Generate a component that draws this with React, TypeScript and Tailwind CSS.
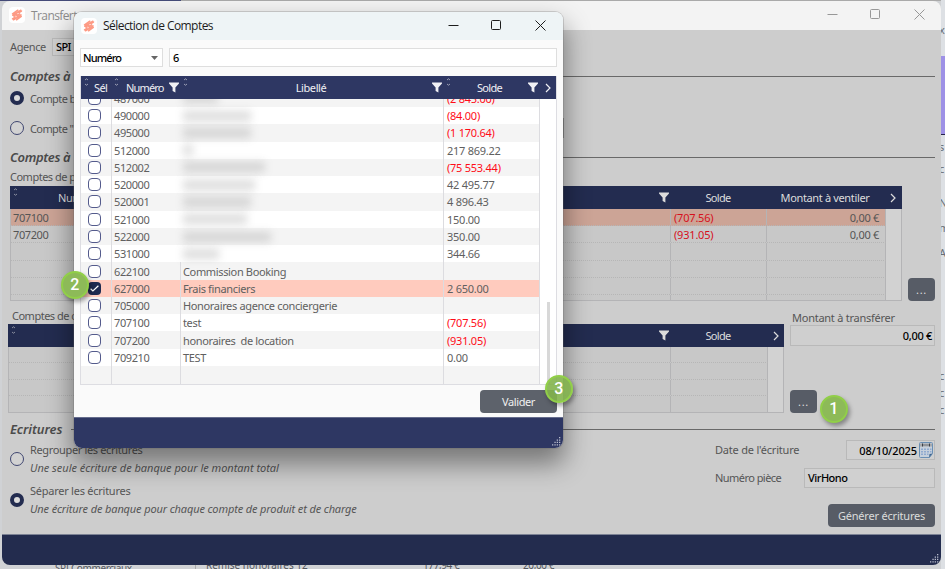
import type { ReactNode } from 'react';

type Account = {
  num: string;
  label?: string;
  // width in px of the masked label
  masked?: number;
  solde?: string;
  checked?: boolean;
};

const accounts: Account[] = [
  { num: '487000', masked: 35, solde: '(2 845.00)' },
  { num: '490000', masked: 68, solde: '(84.00)' },
  { num: '495000', masked: 68, solde: '(1 170.64)' },
  { num: '512000', masked: 10, solde: '217 869.22' },
  { num: '512002', masked: 82, solde: '(75 553.44)' },
  { num: '520000', masked: 72, solde: '42 495.77' },
  { num: '520001', masked: 68, solde: '4 896.43' },
  { num: '521000', masked: 64, solde: '150.00' },
  { num: '522000', masked: 88, solde: '350.00' },
  { num: '531000', masked: 36, solde: '344.66' },
  { num: '622100', label: 'Commission Booking' },
  { num: '627000', label: 'Frais financiers', solde: '2 650.00', checked: true },
  { num: '705000', label: 'Honoraires agence conciergerie' },
  { num: '707100', label: 'test', solde: '(707.56)' },
  { num: '707200', label: 'honoraires  de location', solde: '(931.05)' },
  { num: '709210', label: 'TEST', solde: '0.00' },
];

function Logo() {
  return (
    <div className="flex h-4 w-4 shrink-0 items-center justify-center rounded-sm bg-white">
      <svg width="12" height="12" viewBox="0 0 12 12" fill="none" stroke="#fd9a84" strokeWidth="1.5" strokeLinecap="round">
        <path d="M1.500 4.800 6.800 1.200M1.800 6.300 9.800 1.200M2.900 7.100 6 5M8 3.600 10.500 2M5.800 6.900 8.600 4.900M1.500 9.800 4.200 8M2.500 10.800 10 5.800M5.500 10.800 10.300 7.300" />
      </svg>
    </div>
  );
}

function WindowButtons({ className }: { className: string }) {
  return (
    <svg width="100" height="12" viewBox="0 0 100 12" fill="none" className={className}>
      <path d="M.5 5.5h10" />
      <rect x="43.5" y=".5" width="9" height="9" rx="1" />
      <path d="m87.500 .5 10 10M97.500 .5l-10 10" />
    </svg>
  );
}

function Funnel() {
  return (
    <svg width="10" height="11" viewBox="0 0 10 11" fill="currentColor" className="shrink-0">
      <path d="M0 .5h10v1L6.4 5.6V10.5L3.6 9V5.6L0 1.5z" />
    </svg>
  );
}

function Chevron() {
  return (
    <svg width="6" height="10" viewBox="0 0 6 10" fill="none" stroke="currentColor" strokeWidth="1.2" className="shrink-0">
      <path d="m1 1 4 4-4 4" />
    </svg>
  );
}

function SortMark() {
  return (
    <svg width="5" height="8" viewBox="0 0 5 8" fill="none" stroke="currentColor" strokeWidth=".8" className="mt-0.5 shrink-0 self-start opacity-70">
      <path d="M1 2 2.5.8 4 2M1 6l1.5 1.2L4 6" />
    </svg>
  );
}

function Grip() {
  return (
    <svg width="9" height="9" viewBox="0 0 9 9" fill="#b9bdcd">
      <path d="M7 0h1.3v1.3H7zM7 2.4h1.3v1.3H7zM7 4.8h1.3v1.3H7zM7 7.2h1.3v1.3H7zM4.7 2.4H6v1.3H4.7zM4.7 4.8H6v1.3H4.7zM4.7 7.2H6v1.3H4.7zM2.4 4.8h1.3v1.3H2.4zM2.4 7.2h1.3v1.3H2.4zM0 7.2h1.3v1.3H0z" />
    </svg>
  );
}

function Radio({ on }: { on?: boolean }) {
  return on ? (
    <span className="h-3.5 w-3.5 shrink-0 rounded-full border-4 border-[#232c50] bg-[#dcdcdc]" />
  ) : (
    <span className="h-3.5 w-3.5 shrink-0 rounded-full border border-[#3f4670] bg-[#d2d2d2]" />
  );
}

function Checkbox({ on }: { on?: boolean }) {
  if (!on) return <span className="h-[13px] w-[13px] rounded-[4px] border border-[#545b8c] bg-white" />;
  return (
    <span className="flex h-[13px] w-[13px] items-center justify-center rounded-[4px] bg-[#1d2950]">
      <svg width="9" height="7" viewBox="0 0 9 7" fill="none" stroke="#fff" strokeWidth="1.2">
        <path d="m.6 3.8 2.3 2.2L8.4.8" />
      </svg>
    </span>
  );
}

function Calendar() {
  return (
    <svg width="14" height="16" viewBox="0 0 14 16" className="shrink-0">
      <path d="M.5 1.5q0-1 1-1h11q1 0 1 1v10l-3 4h-9q-1 0-1-1z" fill="#c6d0dc" stroke="#6a8fb4" />
      <path d="M1 1.500h12v3H1z" fill="#a7a9ac" />
      <path d="M3 3h8" stroke="#7c7f84" />
      <path d="M3.5 1.500v3M10.500 1.500v3" stroke="#3c4046" />
      <path d="M2 6.500h2v1.500H2zM5 6.500h2v1.500H5zM8 6.500h2v1.500H8zM11 6.500h1.500v1.500H11zM2 9h2v1.500H2zM5 9h2v1.500H5zM8 9h2v1.500H8zM11 9h1.500v1.500H11zM2 11.500h2V13H2zM5 11.500h2V13H5zM8 11.500h1.500V13H8z" fill="#8faad0" />
      <path d="m10 15.500 .5-3.500 3-.5z" fill="#3b648f" />
    </svg>
  );
}

function Heading({ children }: { children: ReactNode }) {
  return (
    <div className="flex h-4 items-center gap-[9px] text-[13px] leading-4 font-semibold tracking-[-0.05px] text-[#4b4b4b] italic">
      {children}
      <span className="h-px grow bg-[#696969]" />
    </div>
  );
}

function Badge({ n, className }: { n: number; className: string }) {
  return (
    <div
      className={`absolute flex h-7 w-7 items-center justify-center rounded-full border-2 border-[#91cf48] pr-px pb-px font-[Roboto,sans-serif] text-[16px] font-medium text-white shadow-[2px_3px_4px_rgba(0,0,0,0.35)] ${className}`}
    >
      {n}
    </div>
  );
}

function AccountRow({ row, odd }: { row: Account; odd: boolean }) {
  const bg = row.checked ? 'bg-[#ffcbbe]' : odd ? 'bg-white' : 'bg-[#f4f4f4]';
  return (
    <div className={`grid h-[17.27px] shrink-0 grid-cols-[31px_69px_263px_95px] items-center text-[#606060] ${bg}`}>
      <div className="flex h-full items-center justify-center border-r border-[#dcdce0] pr-[3px]">
        <Checkbox on={row.checked} />
      </div>
      <div className={`flex h-full items-center pl-[2px] ${row.masked ? '' : 'border-r border-[#dcdce0]'}`}>{row.num}</div>
      <div className="flex h-full items-center border-r border-[#dcdce0] pl-[2px] tracking-[-0.35px] whitespace-pre">
        {row.masked ? <span className="h-2.5 bg-[#777] opacity-25 blur-[4px]" style={{ width: row.masked }} /> : row.label}
      </div>
      <div className={`pl-[3px] tracking-[-0.25px] ${row.solde?.startsWith('(') ? 'text-[#ff0c18]' : ''}`}>{row.solde}</div>
    </div>
  );
}

function SelectionDialog() {
  return (
    <div className="absolute top-3 left-[74px] flex h-[436px] w-[489px] flex-col rounded-lg bg-[#fafafa] shadow-[0_0_0_1px_rgba(100,100,100,0.25),0_14px_26px_2px_rgba(0,0,0,0.42)]">
      <div className="flex h-7 shrink-0 items-center rounded-t-lg bg-[#eef4f6] pr-[15px] pb-px pl-[7px]">
        <Logo />
        <span className="ml-[6px] grow font-['Open_Sans',sans-serif] text-[12px] tracking-[-0.55px] text-[#1c1c1c]">
          Sélection de Comptes
        </span>
        <WindowButtons className="stroke-[#1c1c1c]" />
      </div>

      <div className="flex shrink-0 gap-1.5 px-1.5 pt-2 font-medium text-black">
        <div className="flex h-[19px] w-[83px] items-center justify-between border border-[#dedede] bg-white pr-1 pl-[2px] tracking-[-0.85px]">
          Numéro
          <svg width="7" height="4" viewBox="0 0 7 4" fill="#666">
            <path d="M0 0h7L3.500 4z" />
          </svg>
        </div>
        <div className="flex h-[19px] grow items-center border border-[#dedede] bg-white pl-[3px]">6</div>
      </div>

      <div className="mt-[9px] ml-1.5 flex h-[309px] w-[477px] shrink-0 flex-col border-x border-b border-[#dddde2] bg-white">
        <div className="z-10 flex h-[23px] shrink-0 bg-[#2e3763] text-[#f0f0f4]">
          <div className="flex w-[30px] items-center gap-[5px] pl-[3px] tracking-[-0.6px]">
            <SortMark />
            Sél
          </div>
          <div className="flex w-[70px] items-center pl-[3px]">
            <SortMark />
            <span className="ml-[7px] grow tracking-[-0.85px]">Numéro</span>
            <span className="pr-[2px]"><Funnel /></span>
          </div>
          <div className="flex w-[263px] items-center pl-[2px]">
            <SortMark />
            <span className="grow pl-0.5 text-center">Libellé</span>
            <span className="pr-[2px]"><Funnel /></span>
          </div>
          <div className="flex grow items-center pr-[5px] pl-[2px]">
            <SortMark />
            <span className="grow text-center tracking-[-0.7px]">Solde</span>
            <Funnel />
            <span className="pl-[7px]"><Chevron /></span>
          </div>
        </div>
        <div className="flex min-h-0 grow">
          <div className="flex w-[458px] flex-col justify-end overflow-hidden">
            {accounts.map((row, i) => (
              <AccountRow key={row.num} row={row} odd={i % 2 === 1} />
            ))}
            <div className="grid h-[18px] shrink-0 grid-cols-[31px_69px_263px_95px] bg-[#f4f4f4]">
              <div className="border-r border-[#dcdce0]" />
              <div className="border-r border-[#dcdce0]" />
              <div className="border-r border-[#dcdce0]" />
            </div>
          </div>
          <div className="flex grow items-end justify-center border-l border-[#dcdce0]">
            <div className="h-[82px] w-[3px] bg-[#d8d8d8]" />
          </div>
        </div>
      </div>

      <div className="flex grow items-start justify-end pt-[5px] pr-1.5">
        <div className="flex h-[23px] w-[77px] items-center justify-center rounded bg-[#5d626b] text-[#f0f0f0]">Valider</div>
      </div>
      <div className="flex h-[31px] shrink-0 items-end justify-end rounded-b-lg border-t border-[#656c8c] bg-[#2e3763] pr-[2px] pb-[2px]">
        <Grip />
      </div>
    </div>
  );
}

function ProductRow({ cells, selected, last }: { cells: string[]; selected?: boolean; last?: boolean }) {
  return (
    <div
      className={`grid grid-cols-[660px_96px_119px] items-center border-[#b6b6b6] ${last ? 'grow' : 'h-[17.2px] shrink-0 border-b border-dotted'} ${selected ? 'bg-[#cca496]' : 'bg-[#c8c8c8]'}`}
    >
      <div className="flex h-full items-center border-r border-[#b4b4b6] pl-0.5">{cells[0]}</div>
      <div className="flex h-full items-center border-r border-[#b4b4b6] pl-[3px] tracking-[-0.2px] text-[#d6101c]">{cells[1]}</div>
      <div className="flex h-full items-center justify-end border-r border-[#b4b4b6] pr-[6px] tracking-[-0.3px]">{cells[2]}</div>
    </div>
  );
}

function TransferWindow() {
  return (
    <div className="absolute top-px left-[2px] flex h-[564px] w-[939px] flex-col overflow-hidden rounded-lg bg-[#cdcdcd] text-[#555]">
      <div className="flex h-[29px] shrink-0 items-center bg-[#f3f3f3] pr-[14px] pb-px pl-[7px]">
        <Logo />
        <span className="ml-[6px] grow font-['Open_Sans',sans-serif] text-[12px] tracking-[-0.6px] text-[#8c8c8c]">Transfert</span>
        <WindowButtons className="stroke-[#979797]" />
      </div>

      <div className="flex grow flex-col pr-1.5 pl-2">
        <div className="mt-2 flex h-[18px] items-center pb-px">
          <span className="w-[42px]">Agence</span>
          <div className="flex h-[18px] w-[200px] items-center border border-[#b9b9b9] bg-[#d0d0d0] pl-[3px] font-medium tracking-[-0.6px] text-black">SPI</div>
        </div>
        <div className="mt-3">
          <Heading><span className="tracking-[-0.35px]">Comptes à</span></Heading>
        </div>
        <div className="mt-[7px] flex h-[14px] items-center gap-[6px] tracking-[-0.6px]">
          <Radio on />
          Compte b
        </div>
        <div className="mt-[13px] flex h-[20px] w-[554px] items-center gap-[6px] border-r border-[#8c8c8c] tracking-[-0.6px]">
          <Radio />
          Compte "
        </div>
        <div className="mt-[11px]">
          <Heading><span className="tracking-[-0.35px]">Comptes à</span></Heading>
        </div>
        <div className="mt-[4px] h-[17px] leading-[15px] tracking-[-0.5px]">Comptes de p</div>

        <div className="flex items-end gap-1.5">
          <div className="flex h-[115px] w-[892px] flex-col border-r border-b border-l border-[#b4b4b6] bg-[#d2d2d2]">
            <div className="-mx-px flex h-[23px] shrink-0 items-center bg-[#232c50] pr-1.5 pl-[3px] text-[#dcdcdc]">
              <SortMark />
              <span className="ml-10 grow">Numéro</span>
              <Funnel />
              <span className="w-[98px] text-center tracking-[-0.7px]">Solde</span>
              <span className="w-[116px] text-center tracking-[-0.35px]">Montant à ventiler</span>
              <span className="pl-[7px]"><Chevron /></span>
            </div>
            <div className="flex w-[875px] grow flex-col">
              <ProductRow cells={['707100', '(707.56)', '0,00 €']} selected />
              <ProductRow cells={['707200', '(931.05)', '0,00 €']} />
              <ProductRow cells={['', '', '']} />
              <ProductRow cells={['', '', '']} />
              <ProductRow cells={['', '', '']} />
              <ProductRow cells={['', '', '']} last />
            </div>
          </div>
          <div className="flex h-[23px] w-[27px] items-center justify-center rounded bg-[#575c66] tracking-[0.7px] text-[#dcdcdc]">...</div>
        </div>

        <div className="-ml-[2px] flex gap-1.5">
          <div className="w-[776px]">
            <div className="h-[23px] pt-[7px] pl-1 leading-[15px] tracking-[-0.5px]">Comptes de c</div>
            <div className="flex h-[89px] flex-col border-r border-b border-l border-[#b4b4b6] bg-[#d2d2d2]">
              <div className="-mx-px flex h-[23px] shrink-0 items-center bg-[#232c50] pr-[5px] pl-[3px] text-[#dcdcdc]">
                <SortMark />
                <span className="grow" />
                <Funnel />
                <span className="w-[98px] text-center tracking-[-0.7px]">Solde</span>
                <span className="pl-[6px]"><Chevron /></span>
              </div>
              <div className="grid w-[759px] grow grid-cols-[662px_97px] grid-rows-4 bg-[#c8c8c8]">
                {[0, 1, 2, 3].map((i) => (
                  <div key={i} className={`col-span-2 grid grid-cols-subgrid border-dotted border-[#b6b6b6] ${i < 3 ? 'border-b' : ''}`}>
                    <div className="border-r border-solid border-[#b4b4b6]" />
                    <div className="border-r border-solid border-[#b4b4b6]" />
                  </div>
                ))}
              </div>
            </div>
          </div>
          <div className="flex grow flex-col">
            <div className="h-[24px] pt-[9px] pl-[2px] leading-[15px] tracking-[-0.25px]">Montant à transférer</div>
            <div className="flex h-[21px] items-center justify-end border border-[#b9b9b9] bg-[#cfcfcf] pr-[2px] font-medium tracking-[-0.3px] text-black">
              0,00 €
            </div>
            <div className="mt-auto flex h-[23px] w-[27px] items-center justify-center rounded bg-[#575c66] tracking-[0.7px] text-[#dcdcdc]">...</div>
          </div>
        </div>

        <div className="mt-2">
          <Heading>Ecritures</Heading>
        </div>
        <div className="flex justify-between">
          <div className="flex flex-col pt-[4px] tracking-[-0.35px]">
            <div className="flex items-center gap-[6px]">
              <Radio />
              <div>
                <div className="h-[18px] leading-[17px]">Regrouper les écritures</div>
                <div className="h-[18px] leading-[18px] tracking-[-0.02px] italic">Une seule écriture de banque pour le montant total</div>
              </div>
            </div>
            <div className="mt-[5px] flex items-center gap-[6px]">
              <Radio on />
              <div>
                <div className="h-[18px] leading-[17px] tracking-[-0.25px]">Séparer les écritures</div>
                <div className="h-[18px] leading-[18px] tracking-[-0.13px] italic">Une écriture de banque pour chaque compte de produit et de charge</div>
              </div>
            </div>
          </div>
          <div className="flex w-[220px] flex-col pt-[3px]">
            <div className="flex h-[20px] items-center justify-between">
              <span className="pb-0.5 tracking-[-0.2px]">Date de l'écriture</span>
              <div className="flex h-[20px] w-[89px] items-center justify-end gap-[2px] border border-[#b9b9b9] bg-[#d0d0d0] pr-px font-medium tracking-[-0.1px] text-black">
                08/10/2025
                <Calendar />
              </div>
            </div>
            <div className="mt-2 flex h-[20px] items-center justify-between">
              <span className="pb-0.5 tracking-[-0.55px]">Numéro pièce</span>
              <div className="flex h-[20px] w-[131px] items-center border border-[#b9b9b9] bg-[#d0d0d0] pb-0.5 pl-[3px] font-medium tracking-[-0.5px] text-black">VirHono</div>
            </div>
            <div className="mt-4 flex h-[23px] w-[107px] items-center justify-center self-end rounded bg-[#575c66] tracking-[-0.2px] text-[#dcdcdc]">
              Générer écritures
            </div>
          </div>
        </div>
      </div>

      <div className="flex h-[31px] shrink-0 items-end justify-end border-t border-[#7c8294] bg-[#232c4e] pr-[2px] pb-[2px]">
        <Grip />
      </div>
    </div>
  );
}

export default function App() {
  return (
    <div className="relative h-[569px] w-[945px] overflow-hidden bg-[#d0d2d5] font-['Noto_Sans',sans-serif] text-[11px] leading-[15px] tracking-[-0.4px]">
      {/* slivers of the application behind the windows */}
      <div className="flex h-px">
        <div className="w-[181px] bg-[#454b78]" />
        <div className="grow bg-[#a9a9a9]" />
      </div>
      <div className="absolute top-0 right-0 flex h-full w-1 flex-col overflow-hidden bg-[#dde0e4] text-[#6b6f76]">
        <div className="h-[22px] pt-[22px]" />
        <div className="-ml-0.5 h-[34px]">x</div>
        <div className="h-[79px] shrink-0 border-b border-[#26264c] bg-[#9e91e6]" />
        <div className="-ml-0.5 flex flex-col pt-1">
          <span className="h-[22px]">s</span>
          <span className="h-[34px]">c</span>
          <span className="h-[25px]">N</span>
          <span className="h-[25px]">m</span>
          <span className="h-[123px]">A</span>
          <span className="h-[17px]">c</span>
          <span className="h-[17px]">c</span>
          <span className="h-[17px]">c</span>
        </div>
      </div>
      <div className="absolute bottom-0 left-0 h-[14px] w-full overflow-hidden text-[10px] leading-[14px] text-[#55585e]">
        <div className="flex pt-1 pl-[55px]">
          <span className="w-[141px] border-r border-[#aaa] pt-0.5">SPI Commerciaux</span>
          <span className="-mt-px w-[217px] pl-2.5 tracking-normal">Remise honoraires 12</span>
          <span className="-mt-px w-[110px] pl-2.5">177,94 €</span>
          <span className="-mt-px">20,00 €</span>
        </div>
      </div>
      <TransferWindow />
      <SelectionDialog />
      <Badge n={1} className="top-[395px] left-[820px] bg-[#8dba58]" />
      <Badge n={2} className="top-[271px] left-[61px] bg-[#8dba58]" />
      <Badge n={3} className="top-[375px] left-[545px] bg-[#83b44c]/90" />
    </div>
  );
}
